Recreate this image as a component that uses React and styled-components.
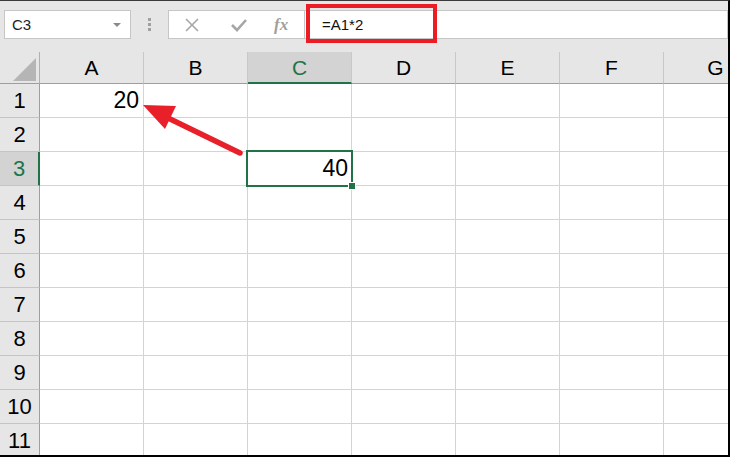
import React from 'react';
import styled, { createGlobalStyle } from 'styled-components';

const GlobalStyle = createGlobalStyle`
  html, body {
    margin: 0;
    padding: 0;
    background: #e6e6e6;
  }
  *, *::before, *::after { box-sizing: border-box; }
`;

const columns = ['A', 'B', 'C', 'D', 'E', 'F', 'G'];
const rows = [1, 2, 3, 4, 5, 6, 7, 8, 9, 10, 11];
const values = { A1: '20', C3: '40' };
const activeCol = 'C';
const activeRow = 3;

function App() {
  return (
    <>
      <GlobalStyle />
      <Frame>
        <FormulaBar>
          <NameBox>
            <span>C3</span>
            <Caret />
          </NameBox>
          <Grip>
            <i /><i /><i />
          </Grip>
          <ButtonBox>
            <svg width="16" height="16" viewBox="0 0 16 16">
              <path d="M2 2 L14 14 M14 2 L2 14" stroke="#a6a6a6" strokeWidth="1.6" fill="none" />
            </svg>
            <svg width="18" height="16" viewBox="0 0 18 16">
              <path d="M2 8 L7 13 L16 3" stroke="#a6a6a6" strokeWidth="2.6" fill="none" />
            </svg>
            <Fx>fx</Fx>
          </ButtonBox>
          <FormulaInput>
            <FormulaText>=A1*2</FormulaText>
          </FormulaInput>
        </FormulaBar>

        <Sheet>
          <Corner>
            <svg width="40" height="32" viewBox="0 0 40 32">
              <polygon points="36,6 36,29 13,29" fill="#b5b5b5" />
            </svg>
          </Corner>
          {columns.map((c) => (
            <ColHead key={c} $active={c === activeCol}>{c}</ColHead>
          ))}
          {rows.map((r) => (
            <React.Fragment key={r}>
              <RowHead $active={r === activeRow}>{r}</RowHead>
              {columns.map((c) => (
                <Cell key={c + r} $selected={c === activeCol && r === activeRow}>
                  {values[c + r]}
                  {c === activeCol && r === activeRow && <Handle />}
                </Cell>
              ))}
            </React.Fragment>
          ))}
          <Arrow width="110" height="60" viewBox="0 0 110 60">
            <path d="M98 51 L24 15" stroke="#e8202a" strokeWidth="5.5" strokeLinecap="round" fill="none" />
            <polygon points="1,3 34,4 23,27" fill="#e8202a" />
          </Arrow>
        </Sheet>
      </Frame>
    </>
  );
}

const Frame = styled.div`
  width: 730px;
  height: 457px;
  overflow: hidden;
  background: #e6e6e6;
  border-top: 1px solid #3a3a3a;
  border-right: 2px solid #000;
  border-bottom: 2px solid #000;
  font-family: 'Liberation Sans', Arial, sans-serif;
`;

const FormulaBar = styled.div`
  display: flex;
  align-items: stretch;
  height: 29px;
  margin: 9px 0 13px 4px;
`;

const NameBox = styled.div`
  width: 127px;
  background: #fff;
  border: 1px solid #c6c6c6;
  display: flex;
  align-items: center;
  justify-content: space-between;
  padding: 0 9px 0 7px;
  font-size: 15px;
  color: #222;
`;

const Caret = styled.span`
  width: 0;
  height: 0;
  border-left: 4px solid transparent;
  border-right: 4px solid transparent;
  border-top: 4px solid #8a8a8a;
`;

const Grip = styled.div`
  width: 37px;
  display: flex;
  flex-direction: column;
  align-items: center;
  justify-content: center;
  gap: 2px;
  i {
    display: block;
    width: 3px;
    height: 3px;
    background: #a0a0a0;
  }
`;

const ButtonBox = styled.div`
  width: 137px;
  background: #fff;
  border: 1px solid #c6c6c6;
  display: flex;
  align-items: center;
  padding: 0 0 0 15px;
  gap: 30px;
`;

const Fx = styled.span`
  font-family: 'Liberation Serif', 'Times New Roman', serif;
  font-style: italic;
  font-weight: bold;
  font-size: 17px;
  color: #a0a0a0;
  margin-left: -4px;
`;

const FormulaInput = styled.div`
  flex: 1;
  background: #fff;
  border: 1px solid #c6c6c6;
  border-left: none;
  position: relative;
  display: flex;
  align-items: center;
  padding-left: 17px;
  &::after {
    content: '';
    position: absolute;
    left: 1px;
    top: -7px;
    width: 131px;
    height: 39px;
    border: 4px solid #ec1c24;
  }
`;

const FormulaText = styled.span`
  font-size: 15px;
  color: #111;
`;

const Sheet = styled.div`
  position: relative;
  display: grid;
  grid-template-columns: 40px repeat(7, 104px);
  grid-auto-rows: 34px;
  grid-template-rows: 32px;
`;

const Corner = styled.div`
  border-right: 1px solid #b0b0b0;
  border-bottom: 1px solid #9e9e9e;
  svg { display: block; }
`;

const ColHead = styled.div`
  display: flex;
  align-items: center;
  justify-content: center;
  font-size: 21px;
  color: ${(p) => (p.$active ? '#217346' : '#000')};
  background: ${(p) => (p.$active ? '#d3d3d3' : '#e6e6e6')};
  border-right: 1px solid #c8c8c8;
  border-bottom: ${(p) => (p.$active ? '2px solid #217346' : '1px solid #9e9e9e')};
  padding-top: ${(p) => (p.$active ? '1px' : '0')};
`;

const RowHead = styled.div`
  display: flex;
  align-items: center;
  justify-content: center;
  font-size: 22px;
  color: ${(p) => (p.$active ? '#217346' : '#000')};
  background: ${(p) => (p.$active ? '#d3d3d3' : '#e6e6e6')};
  border-bottom: 1px solid #c4c4c4;
  border-right: ${(p) => (p.$active ? '2px solid #217346' : '1px solid #9e9e9e')};
`;

const Cell = styled.div`
  position: relative;
  display: flex;
  align-items: center;
  justify-content: flex-end;
  padding-right: ${(p) => (p.$selected ? '3px' : '4px')};
  font-size: 23px;
  color: #000;
  background: #fff;
  border-right: 1px solid #d4d4d4;
  border-bottom: 1px solid #d4d4d4;
  ${(p) => p.$selected && `
    outline: 2px solid #217346;
    outline-offset: -1px;
    z-index: 1;
    margin: -1px 0 0 -1px;
  `}
`;

const Handle = styled.span`
  position: absolute;
  right: -4px;
  bottom: -4px;
  width: 6px;
  height: 6px;
  background: #217346;
  border: 1px solid #fff;
  box-sizing: content-box;
  margin: -1px;
`;

const Arrow = styled.svg`
  position: absolute;
  left: 142px;
  top: 50px;
  z-index: 2;
`;

export default App;
